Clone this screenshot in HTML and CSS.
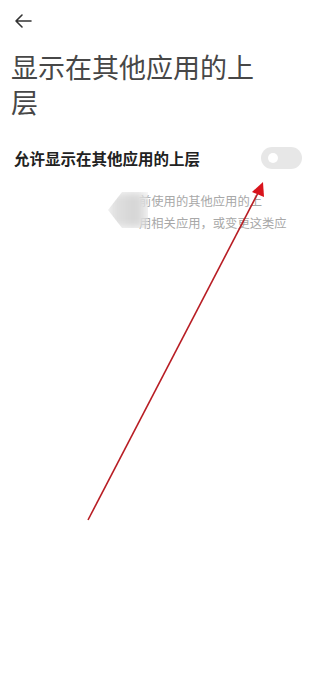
FILE: index.html
```html
<!DOCTYPE html>
<html lang="zh">
  <head>
    <meta charset="UTF-8" />
    <meta name="viewport" content="width=device-width, initial-scale=1.0" />
    <title>显示在其他应用的上层</title>
    <link rel="stylesheet" href="styles.css">
  </head>
  <body>
    <div class="topbar">
      <svg class="back" width="20" height="20" viewBox="0 0 20 20">
        <path d="M18 10H3M9 4L3 10l6 6" fill="none" stroke="#333" stroke-width="1.6" stroke-linecap="round" stroke-linejoin="round" />
      </svg>
    </div>
    <h1 class="title">显示在其他应用的上层</h1>

    <div class="row">
      <span class="label">允许显示在其他应用的上层</span>
      <span class="switch"><span class="knob"></span></span>
    </div>

    <div class="desc">
      <span class="smudge"></span>
      <p>前使用的其他应用的上<br>用相关应用，或变更这类应</p>
    </div>

    <!-- 标注箭头 -->
    <svg class="pointer" width="320" height="678" viewBox="0 0 320 678">
      <line x1="88" y1="520" x2="258" y2="193" stroke="#b81d24" stroke-width="1.6" />
      <polygon points="263,182 264,197 252,192" fill="#d8141c" />
    </svg>
  </body>
</html>
```

FILE: styles.css
```css
html,
body {
  margin: 0;
  padding: 0;
  background: #fff;
  font-family: "Noto Sans CJK SC", "Noto Sans", sans-serif;
}

.topbar {
  height: 42px;
  padding: 11px 0 0 13px;
  box-sizing: border-box;
}

.back {
  display: block;
}

.title {
  margin: 7px 0 0;
  padding: 0 40px 0 11px;
  font-size: 27px;
  line-height: 35px;
  font-weight: 400;
  color: #474747;
}

.row {
  display: flex;
  justify-content: space-between;
  align-items: center;
  margin-top: 28px;
  padding: 0 18px 0 14px;
}

.label {
  font-size: 15.5px;
  font-weight: 700;
  color: #222;
}

.switch {
  display: flex;
  align-items: center;
  width: 41px;
  height: 22px;
  border-radius: 11px;
  background: #e7e7e7;
  padding-left: 7px;
  box-sizing: border-box;
}

.knob {
  width: 10px;
  height: 10px;
  border-radius: 50%;
  background: #fff;
}

.desc {
  position: relative;
  margin-top: 21px;
  padding-left: 139px;
}

.desc p {
  margin: 0;
  font-size: 12.3px;
  line-height: 22px;
  color: #a8a8a8;
}

.smudge {
  position: absolute;
  left: 108px;
  top: 2px;
  width: 40px;
  height: 36px;
  background: linear-gradient(90deg, #e4e4e4, #d4d4d4 70%, #e8e8e8);
  clip-path: polygon(35% 0, 100% 0, 100% 100%, 35% 100%, 0 50%);
  filter: blur(5px);
}

.pointer {
  position: absolute;
  left: 0;
  top: 0;
  pointer-events: none;
}
```
